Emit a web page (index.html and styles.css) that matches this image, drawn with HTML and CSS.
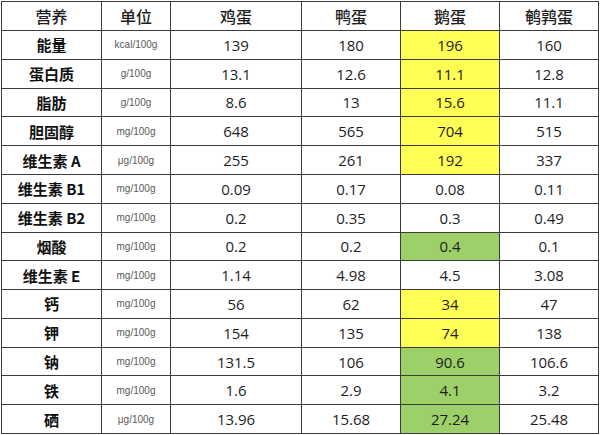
FILE: index.html
```html
<!DOCTYPE html>
<html lang="zh">
<head>
<meta charset="utf-8">
<link rel="stylesheet" href="styles.css">
</head>
<body>
<div class="table">
  <div class="c h">营养</div><div class="c h">单位</div><div class="c h">鸡蛋</div><div class="c h">鸭蛋</div><div class="c h">鹅蛋</div><div class="c h">鹌鹑蛋</div>

  <div class="c l">能量</div><div class="c u">kcal/100g</div><div class="c n">139</div><div class="c n">180</div><div class="c n y">196</div><div class="c n">160</div>
  <div class="c l">蛋白质</div><div class="c u">g/100g</div><div class="c n">13.1</div><div class="c n">12.6</div><div class="c n y">11.1</div><div class="c n">12.8</div>
  <div class="c l">脂肪</div><div class="c u">g/100g</div><div class="c n">8.6</div><div class="c n">13</div><div class="c n y">15.6</div><div class="c n">11.1</div>
  <div class="c l">胆固醇</div><div class="c u">mg/100g</div><div class="c n">648</div><div class="c n">565</div><div class="c n y">704</div><div class="c n">515</div>
  <div class="c l">维生素 A</div><div class="c u">μg/100g</div><div class="c n">255</div><div class="c n">261</div><div class="c n y">192</div><div class="c n">337</div>
  <div class="c l">维生素 B1</div><div class="c u">mg/100g</div><div class="c n">0.09</div><div class="c n">0.17</div><div class="c n">0.08</div><div class="c n">0.11</div>
  <div class="c l">维生素 B2</div><div class="c u">mg/100g</div><div class="c n">0.2</div><div class="c n">0.35</div><div class="c n">0.3</div><div class="c n">0.49</div>
  <div class="c l">烟酸</div><div class="c u">mg/100g</div><div class="c n">0.2</div><div class="c n">0.2</div><div class="c n g">0.4</div><div class="c n">0.1</div>
  <div class="c l">维生素 E</div><div class="c u">mg/100g</div><div class="c n">1.14</div><div class="c n">4.98</div><div class="c n">4.5</div><div class="c n">3.08</div>
  <div class="c l">钙</div><div class="c u">mg/100g</div><div class="c n">56</div><div class="c n">62</div><div class="c n y">34</div><div class="c n">47</div>
  <div class="c l">钾</div><div class="c u">mg/100g</div><div class="c n">154</div><div class="c n">135</div><div class="c n y">74</div><div class="c n">138</div>
  <div class="c l">钠</div><div class="c u">mg/100g</div><div class="c n">131.5</div><div class="c n">106</div><div class="c n g">90.6</div><div class="c n">106.6</div>
  <div class="c l">铁</div><div class="c u">mg/100g</div><div class="c n">1.6</div><div class="c n">2.9</div><div class="c n g">4.1</div><div class="c n">3.2</div>
  <div class="c l">硒</div><div class="c u">μg/100g</div><div class="c n">13.96</div><div class="c n">15.68</div><div class="c n g">27.24</div><div class="c n">25.48</div>
</div>
</body>
</html>
```
FILE: styles.css
```css
html, body {
  margin: 0;
  background: #ffffff;
}
body {
  padding: 1px 0 0 1px;
}
.table {
  display: grid;
  grid-template-columns: 99px 68px 130px 98px 98px 98px;
  grid-template-rows: 28px repeat(14, 1fr);
  gap: 1px;
  padding: 1px;
  width: 598px;
  height: 433px;
  box-sizing: border-box;
  background: #3c3c3c;
  font-family: "Open Sans", "Noto Sans CJK SC", sans-serif;
  color: #1a1a1a;
}
.c {
  background: #ffffff;
  display: flex;
  align-items: center;
  justify-content: center;
  white-space: nowrap;
}
.h {
  font-family: "Noto Sans CJK SC", sans-serif;
  font-size: 16px;
  font-weight: 500;
  color: #1e1e1e;
}
.l {
  font-family: "Noto Sans CJK SC", sans-serif;
  font-size: 15px;
  font-weight: 700;
  color: #111;
}
.u {
  font-family: "Liberation Sans", Arial, sans-serif;
  font-size: 10px;
  color: #5a5a5a;
}
.n {
  font-size: 15px;
  color: #1e1e1e;
}
.y {
  background: #ffff55;
}
.g {
  background: #9dd068;
}
```
